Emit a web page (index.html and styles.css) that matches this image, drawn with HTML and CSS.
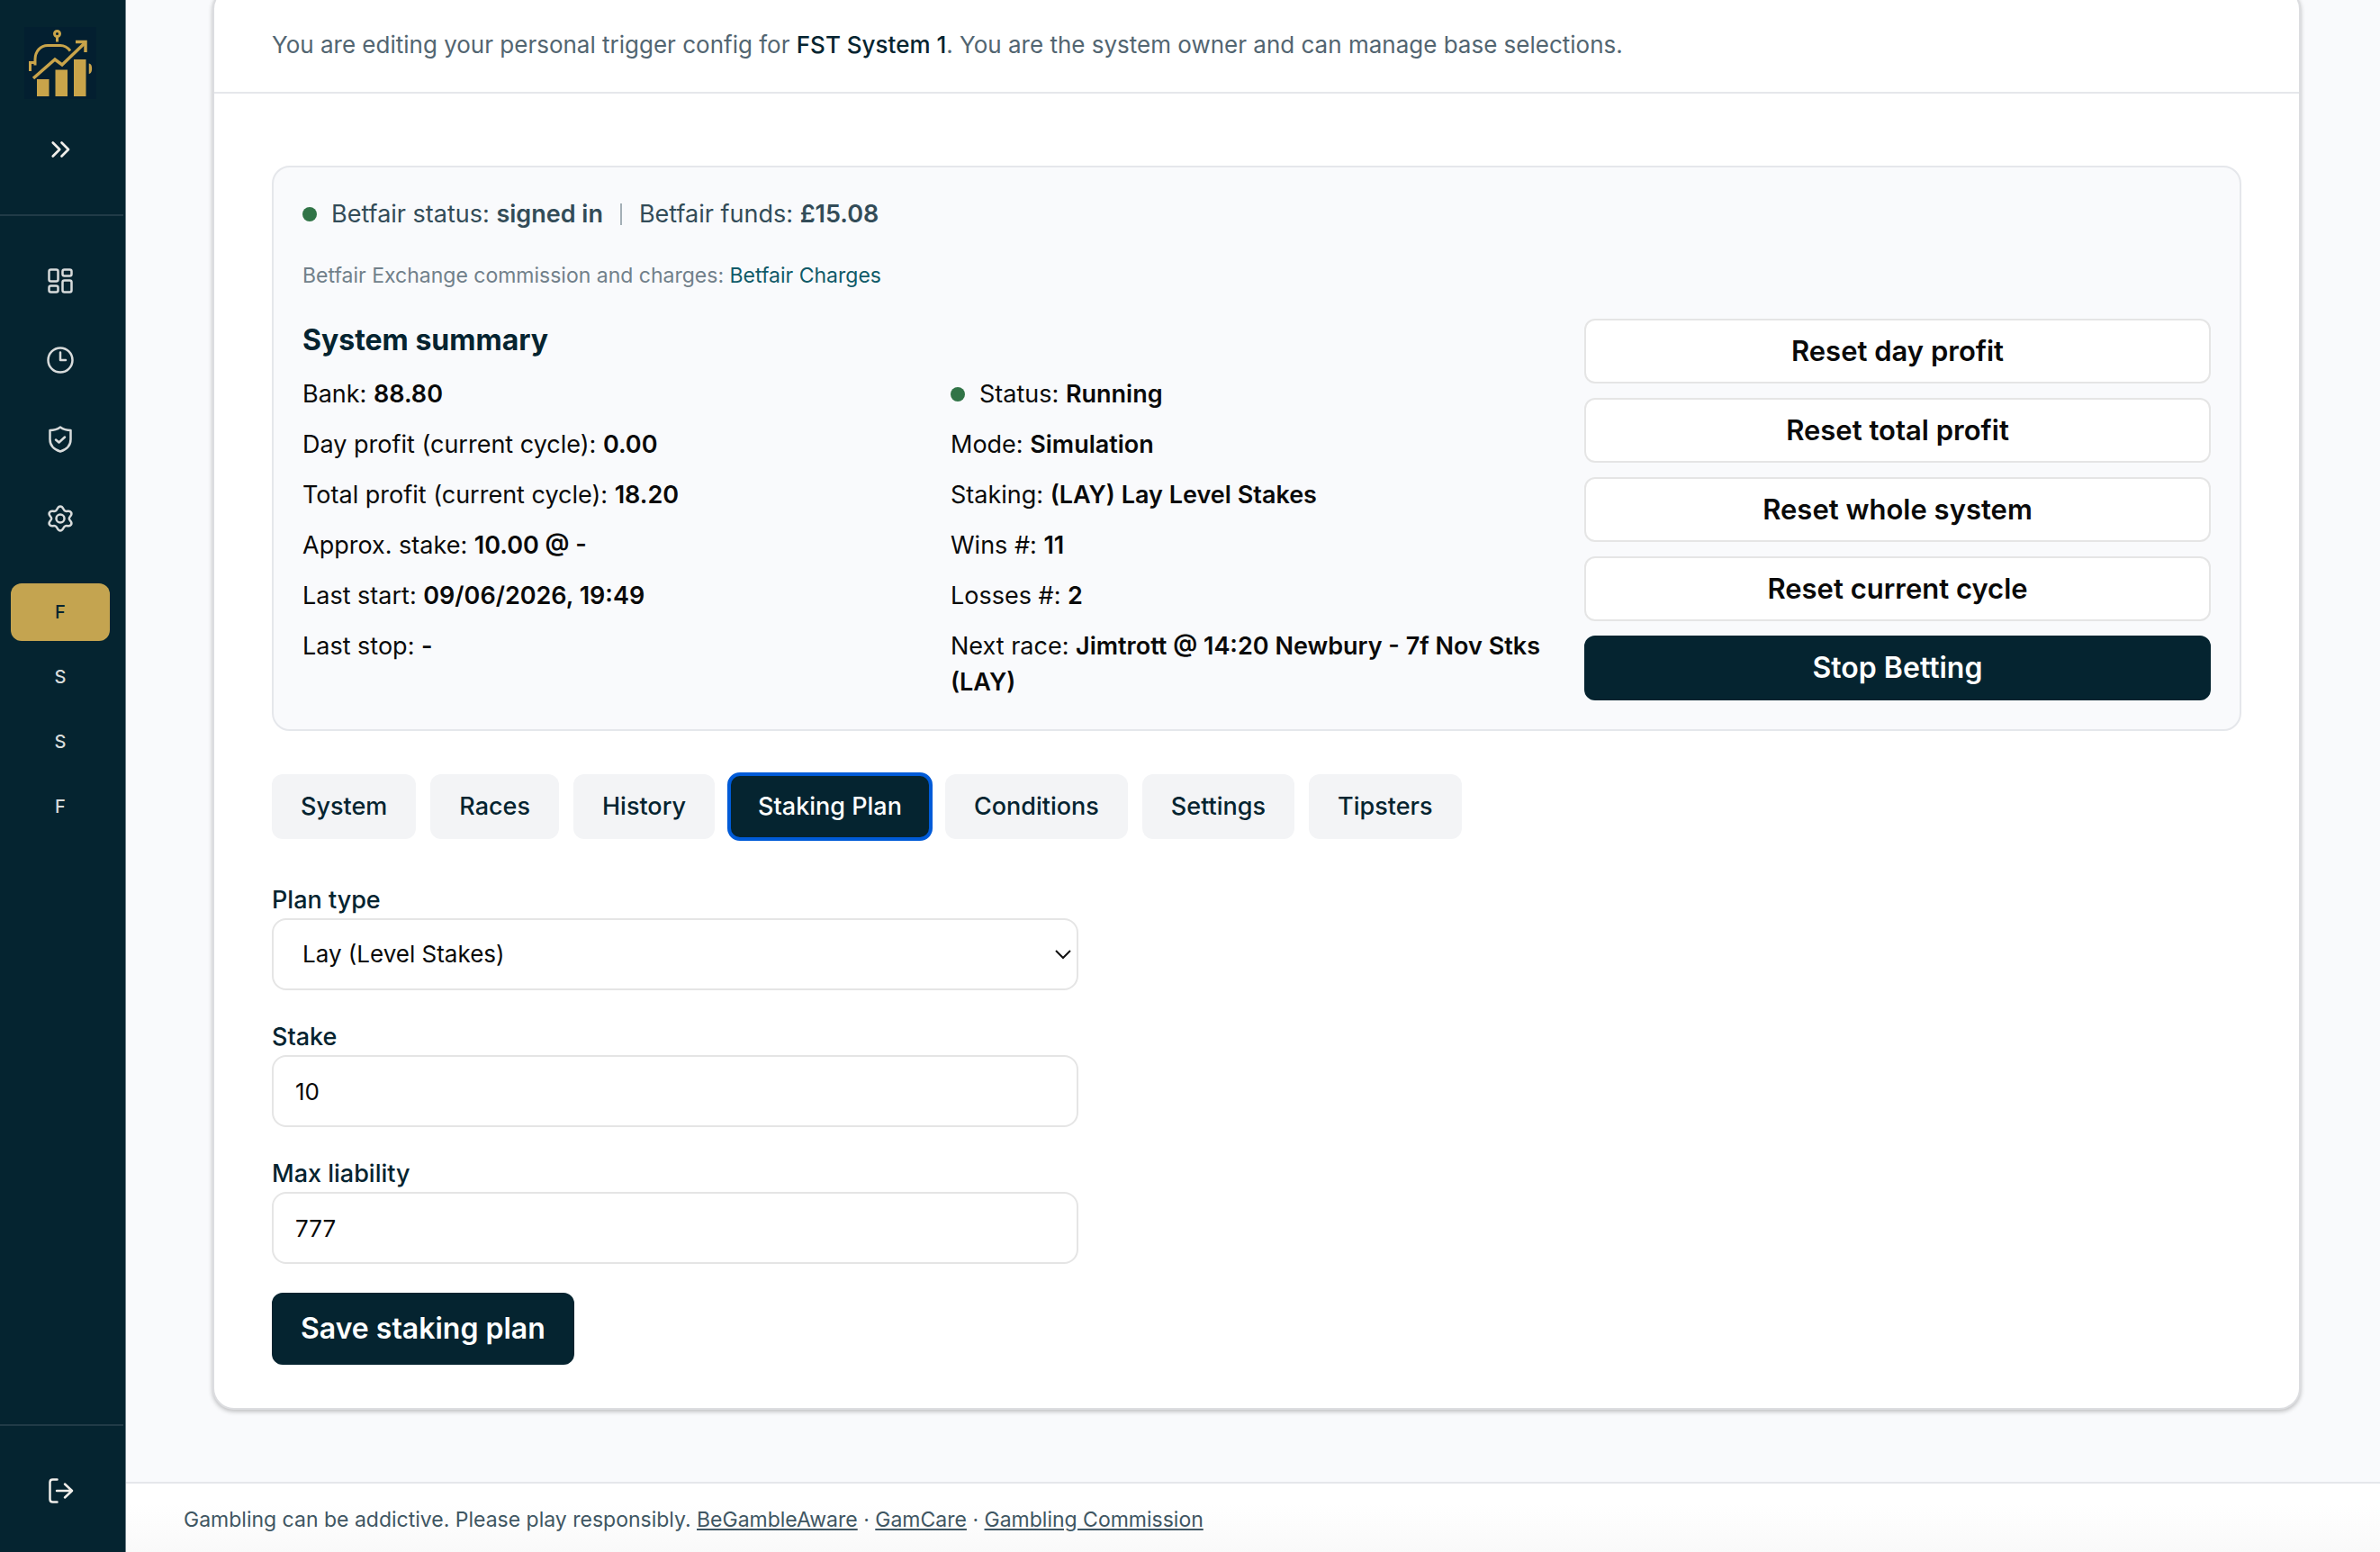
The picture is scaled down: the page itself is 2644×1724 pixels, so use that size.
FILE: index.html
```
<!DOCTYPE html>
<html lang="en">
<head>
  <meta charset="UTF-8">
  <meta name="viewport" content="width=device-width, initial-scale=1.0">
  <title>FST System 1 - Staking Plan</title>
  <link rel="stylesheet" href="styles.css">
</head>
<body>
  <div class="layout">
    <aside class="sidebar">
      <div class="sidebar-header">
        <a href="#" class="logo" aria-label="Home">
          <svg viewBox="0 0 80 80" fill="none" stroke="#c9a44a" stroke-width="3">
            <circle cx="36.500" cy="7.500" r="3"/>
            <path d="M36.500 10.500v6"/>
            <path d="M6.500 49v-9.500h5.500v3M12 41v-5c0-9 6-15.500 14-15.500h14c5 0 8 2 11 6"/>
            <path d="M10 57L34 36l8 6L68 17" stroke-width="3.500"/>
            <path d="M57 16.500h11V28" stroke-width="3.500"/>
            <path d="M72.500 41.500c2.500 1 2.500 8.500 0 9.500z" fill="#c9a44a" stroke-width="1.500"/>
            <g fill="#c9a44a" stroke="none">
              <rect x="14" y="58" width="13.500" height="19"/>
              <rect x="34.500" y="47.500" width="13.500" height="29.500"/>
              <rect x="55" y="36" width="13.500" height="41"/>
            </g>
          </svg>
        </a>
        <button class="toggle" aria-label="Expand sidebar">
          <svg viewBox="0 0 24 24" class="icon"><path d="M6.500 7l5 5-5 5M13 7l5 5-5 5"/></svg>
        </button>
      </div>
      <nav class="nav">
        <a href="#" class="nav-link" aria-label="Dashboard">
          <svg viewBox="0 0 36 36" class="icon"><rect x="5.500" y="5.500" width="10" height="13" rx="2"/><rect x="20.500" y="5.500" width="10" height="7" rx="2"/><rect x="20.500" y="17.500" width="10" height="13" rx="2"/><rect x="5.500" y="23.500" width="10" height="7" rx="2"/></svg>
        </a>
        <a href="#" class="nav-link" aria-label="History">
          <svg viewBox="0 0 36 36" class="icon"><circle cx="18" cy="18" r="13.500"/><path d="M18 9.500V18h6"/></svg>
        </a>
        <a href="#" class="nav-link" aria-label="Security">
          <svg viewBox="0 0 36 36" class="icon"><path d="M18 4.500c3 2.200 7 3.500 11.500 3.500v10c0 7.500-5 11.500-11.500 13.500C11.500 29.500 6.500 25.500 6.500 18V8C11 8 15 6.700 18 4.500z"/><path d="M13 18.500l3.500 3 6.500-6"/></svg>
        </a>
        <a href="#" class="nav-link" aria-label="Settings">
          <svg viewBox="0 0 36 36" class="icon"><path d="M18 4.500c3.500 0 3 4.200 5.500 5.200s4.500-1.500 6.500 1.500-2.200 4.500-2.200 6.800 4.200 3.800 2.200 6.800-4 .5-6.500 1.500-2 5.200-5.500 5.200-3-4.200-5.500-5.200S8 27.800 6 24.800s2.200-4.500 2.200-6.800S4 14.200 6 11.200s4-.5 6.500-1.500 2-5.200 5.500-5.200z"/><circle cx="18" cy="18" r="4.500"/></svg>
        </a>
      </nav>
      <nav class="systems">
        <a href="#" class="system-link active">F</a>
        <a href="#" class="system-link">S</a>
        <a href="#" class="system-link">S</a>
        <a href="#" class="system-link">F</a>
      </nav>
      <div class="sidebar-footer">
        <button class="toggle" aria-label="Log out">
          <svg viewBox="0 0 36 36" class="icon"><path d="M14.500 5.500h-5c-2 0-3 1-3 3v19c0 2 1 3 3 3h5M14 18h17M23 10.500l8 7.500-8 7.500"/></svg>
        </button>
      </div>
    </aside>

    <div class="page">
      <main class="content">
        <div class="card">
          <p class="card-header">You are editing your personal trigger config for <strong>FST System 1</strong>. You are the system owner and can manage base selections.</p>
          <div class="card-body">
            <section class="summary">
              <div class="account">
                <span class="dot"></span>
                <span>Betfair status: <strong>signed in</strong></span>
                <span class="divider"></span>
                <span>Betfair funds: <strong>£15.08</strong></span>
              </div>
              <p class="charges">Betfair Exchange commission and charges: <a href="#">Betfair Charges</a></p>
              <div class="summary-grid">
                <div class="summary-info">
                  <h2>System summary</h2>
                  <div class="stats">
                    <div class="stats-column">
                      <p>Bank: <strong>88.80</strong></p>
                      <p>Day profit (current cycle): <strong>0.00</strong></p>
                      <p>Total profit (current cycle): <strong>18.20</strong></p>
                      <p>Approx. stake: <strong>10.00 @ -</strong></p>
                      <p>Last start: <strong>09/06/2026, 19:49</strong></p>
                      <p>Last stop: <strong>-</strong></p>
                    </div>
                    <div class="stats-column">
                      <p class="status"><span class="dot"></span><span>Status: <strong>Running</strong></span></p>
                      <p>Mode: <strong>Simulation</strong></p>
                      <p>Staking: <strong>(LAY) Lay Level Stakes</strong></p>
                      <p>Wins #: <strong>11</strong></p>
                      <p>Losses #: <strong>2</strong></p>
                      <p>Next race: <strong>Jimtrott @ 14:20 Newbury - 7f Nov Stks (LAY)</strong></p>
                    </div>
                  </div>
                </div>
                <div class="actions">
                  <button class="btn">Reset day profit</button>
                  <button class="btn">Reset total profit</button>
                  <button class="btn">Reset whole system</button>
                  <button class="btn">Reset current cycle</button>
                  <button class="btn btn-primary">Stop Betting</button>
                </div>
              </div>
            </section>

            <div class="tabs">
              <button class="tab">System</button>
              <button class="tab">Races</button>
              <button class="tab">History</button>
              <button class="tab active">Staking Plan</button>
              <button class="tab">Conditions</button>
              <button class="tab">Settings</button>
              <button class="tab">Tipsters</button>
            </div>

            <form class="plan-form">
              <div class="field">
                <label for="plan_type">Plan type</label>
                <div class="select-wrap">
                  <select id="plan_type">
                    <option>Lay (Level Stakes)</option>
                  </select>
                  <svg viewBox="0 0 20 20" class="select-arrow"><path d="M2 6l8 8 8-8"/></svg>
                </div>
              </div>
              <div class="field">
                <label for="stake">Stake</label>
                <input type="text" id="stake" value="10">
              </div>
              <div class="field">
                <label for="max_liability">Max liability</label>
                <input type="text" id="max_liability" value="777">
              </div>
              <button type="button" class="btn btn-primary btn-save">Save staking plan</button>
            </form>
          </div>
        </div>
      </main>
      <footer class="footer">
        Gambling can be addictive. Please play responsibly.
        <a href="#">BeGambleAware</a> · <a href="#">GamCare</a> · <a href="#">Gambling Commission</a>
      </footer>
    </div>
  </div>
</body>
</html>
```
FILE: styles.css
```
:root {
  --dark: #052430;
  --page-bg: #f9fafc;
  --border: #e5e7eb;
  --gold: #c4a450;
  --green: #317447;
  --text: #0a0a0a;
  --muted: #526571;
}

* {
  box-sizing: border-box;
}

body {
  margin: 0;
  font-family: Inter, "Liberation Sans", sans-serif;
  font-size: 27px;
  line-height: 40px;
  color: var(--text);
  background-color: var(--page-bg);
}

p,
h2 {
  margin: 0;
}

button,
input,
select {
  font: inherit;
  color: inherit;
}

button {
  cursor: pointer;
}

strong {
  font-weight: 600;
}

.layout {
  display: flex;
  min-height: 100vh;
}

/* Sidebar */
.sidebar {
  display: flex;
  flex-direction: column;
  flex: 0 0 140px;
  padding-right: 2px;
  background-color: var(--dark);
  border-right: 1px solid #6f8088;
  color: #d8dbdb;
}

.sidebar-header {
  display: flex;
  flex-direction: column;
  align-items: center;
  gap: 36px;
  height: 240px;
  padding: 30px 4px 0 0;
  border-bottom: 2px solid #213b47;
}

.logo {
  width: 80px;
  height: 80px;
  background-color: #031f30;
}

.logo svg {
  display: block;
}

.icon {
  display: block;
  width: 36px;
  height: 36px;
  fill: none;
  stroke: currentColor;
  stroke-width: 2.5;
  stroke-linecap: round;
  stroke-linejoin: round;
}

.toggle {
  display: flex;
  padding: 2px;
  background: none;
  border: 0;
  color: #f0eeea;
}

.sidebar-header .toggle .icon {
  stroke-width: 1.8;
}

.nav {
  display: flex;
  flex-direction: column;
  gap: 16px;
  padding: 36px 15px 36px 12px;
}

.nav-link {
  display: flex;
  align-items: center;
  justify-content: center;
  height: 72px;
  color: inherit;
}

.systems {
  display: flex;
  flex-direction: column;
  gap: 8px;
  padding: 0 15px 0 12px;
}

.system-link {
  height: 64px;
  border-radius: 12px;
  color: inherit;
  font-size: 20px;
  font-weight: 500;
  line-height: 64px;
  text-align: center;
  text-decoration: none;
}

.system-link.active {
  background-color: var(--gold);
  color: var(--dark);
}

.sidebar-footer {
  display: flex;
  align-items: center;
  justify-content: center;
  height: 142px;
  margin-top: auto;
  padding: 4px 4px 0 0;
  border-top: 2px solid #213b47;
}

/* Page */
.page {
  display: flex;
  flex-direction: column;
  flex: 1;
  min-width: 0;
}

.content {
  flex: 1;
  padding: 0 88px 80px 96px;
}

.card {
  margin-top: -14px;
  background-color: #fff;
  border: 2px solid #dcdde0;
  border-radius: 24px;
  box-shadow: 0 2px 5px rgba(0, 0, 0, 0.25);
}

.card-header {
  padding: 42px 64px 32px;
  border-bottom: 2px solid var(--border);
  color: var(--muted);
  font-size: 26px;
}

.card-header strong {
  color: var(--dark);
  font-weight: 500;
}

.card-body {
  padding: 80px 64px 48px;
}

.summary {
  padding: 32px;
  background-color: var(--page-bg);
  border: 2px solid var(--border);
  border-radius: 20px;
}

.account {
  display: flex;
  align-items: center;
  color: #334c58;
}

.dot {
  flex: none;
  width: 16px;
  height: 16px;
  margin-right: 16px;
  border-radius: 50%;
  background-color: var(--green);
}

.divider {
  width: 2px;
  height: 24px;
  margin: 0 19px;
  background-color: #a3afb6;
}

.charges {
  margin: 32px 0;
  color: #71808a;
  font-size: 23px;
  line-height: 32px;
}

.charges a {
  color: #0f5a68;
  text-decoration: none;
}

.summary-grid {
  display: grid;
  grid-template-columns: repeat(3, 1fr);
  gap: 16px;
}

.summary-info {
  grid-column: span 2;
}

.summary-info h2 {
  margin-bottom: 16px;
  color: var(--dark);
  font-size: 32px;
  font-weight: 700;
  line-height: 48px;
}

.stats {
  display: grid;
  grid-template-columns: 1fr 1fr;
  gap: 32px;
}

.stats-column,
.actions {
  display: flex;
  flex-direction: column;
  gap: 16px;
}

.status {
  display: flex;
  align-items: center;
}

.btn {
  height: 72px;
  padding: 0 30px;
  background-color: #fff;
  border: 2px solid #e5e5e5;
  border-radius: 12px;
  font-size: 31px;
  font-weight: 600;
}

.btn-primary {
  background-color: var(--dark);
  border-color: var(--dark);
  color: #fff;
  font-size: 32px;
}

.tabs {
  display: flex;
  flex-wrap: wrap;
  gap: 16px;
  margin: 48px 0;
}

.tab {
  height: 72px;
  padding: 0 32px;
  background-color: #f3f4f6;
  border: 0;
  border-radius: 12px;
  color: var(--dark);
  font-weight: 500;
}

.tab.active {
  background-color: var(--dark);
  color: #fff;
  outline: 4px solid #005bd8;
  outline-offset: -2px;
}

/* Staking plan form */
.plan-form {
  display: flex;
  flex-direction: column;
  align-items: flex-start;
  gap: 32px;
}

.field {
  width: 100%;
  max-width: 896px;
}

.field label {
  display: block;
  color: var(--dark);
  font-weight: 500;
}

.field input,
.field select {
  display: block;
  width: 100%;
  height: 80px;
  padding: 0 24px;
  background-color: #fff;
  border: 2px solid #e5e5e5;
  border-radius: 16px;
  font-size: 26px;
}

.field select {
  padding: 0 32px;
  appearance: none;
}

.select-wrap {
  display: grid;
  align-items: center;
}

.select-wrap > * {
  grid-area: 1 / 1;
}

.select-arrow {
  justify-self: end;
  width: 20px;
  height: 20px;
  margin-right: 7px;
  fill: none;
  stroke: #111;
  stroke-width: 2;
  pointer-events: none;
}

.btn-save {
  height: 80px;
}

.footer {
  padding: 24px 64px 20px;
  border-top: 2px solid var(--border);
  background: linear-gradient(#fff 30%, #f9f9f9);
  color: #3f5662;
  font-size: 23px;
  line-height: 32px;
}

.footer a {
  color: inherit;
}
```
